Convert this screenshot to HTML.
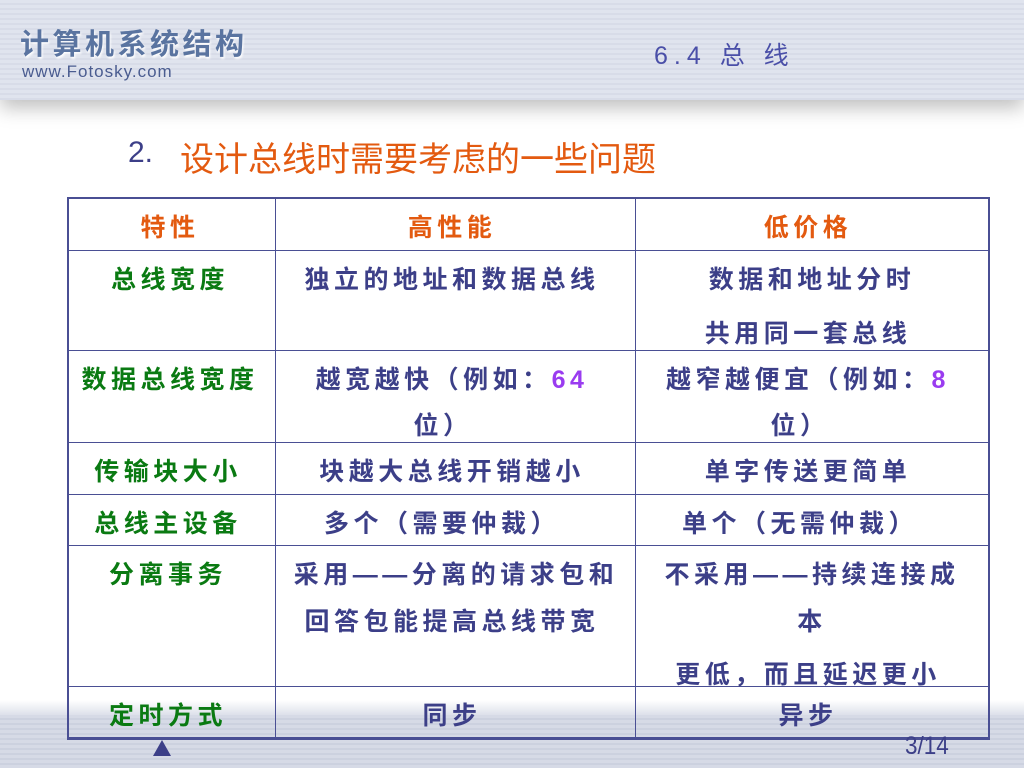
<!DOCTYPE html>
<html><head><meta charset="utf-8"><style>
body{margin:0;width:1024px;height:768px;overflow:hidden;background:#fff;position:relative;font-family:"Liberation Sans","Noto Sans CJK SC",sans-serif}
.hdr{position:absolute;left:0;top:0;width:1024px;height:100px;background:repeating-linear-gradient(#e0e4ee 0 3px,#d8dce8 3px 5px);box-shadow:0 8px 18px rgba(0,0,0,.25)}
.ftr{position:absolute;left:0;top:715px;width:1024px;height:53px;background:repeating-linear-gradient(#d6dae6 0 3px,#ccd1df 3px 5px)}
.ftrg{position:absolute;left:0;top:700px;width:1024px;height:18px;background:linear-gradient(#fff,#d6dae6)}
.t{position:absolute;white-space:nowrap;font-weight:bold;font-size:25px;letter-spacing:4.5px;color:#3c3f88;transform:translateX(-50%)}
.g{color:#0a7a12}.o{color:#e35a10}.p{color:#9a3cf0}
.vl{position:absolute;top:198px;height:539px;width:1px;background:#4a4f94}
.hl{position:absolute;left:68px;width:920px;height:1px;background:#4a4f94}
</style></head><body>
<div class="hdr"></div>
<div class="ftrg"></div><div class="ftr"></div>
<div style="position:absolute;left:20px;top:21px;font-size:29px;font-weight:bold;letter-spacing:3.5px;color:#5a74a0;text-shadow:1px 2px 2px #fff">计算机系统结构</div>
<div style="position:absolute;left:22px;top:62px;font-size:17px;color:#4a5c90;letter-spacing:1px">www.Fotosky.com</div>
<div style="position:absolute;left:654px;top:36px;font-size:25px;color:#4a4fa8;letter-spacing:6px">6.4 总 线</div>
<div style="position:absolute;left:128px;top:136px;font-size:30px;color:#3c3f88">2.</div>
<div style="position:absolute;left:180px;top:132px;font-size:34px;color:#e35a10">设计总线时需要考虑的一些问题</div>
<div style="position:absolute;left:67px;top:197px;width:919px;height:538px;border:2px solid #4a4f94;border-bottom-width:3px"></div>
<div class="vl" style="left:275px"></div><div class="vl" style="left:635px"></div>
<div class="hl" style="top:250px"></div><div class="hl" style="top:350px"></div><div class="hl" style="top:442px"></div><div class="hl" style="top:494px"></div><div class="hl" style="top:545px"></div><div class="hl" style="top:686px"></div>
<div class="t o" style="left:170px;top:208px">特性</div>
<div class="t o" style="left:452px;top:208px">高性能</div>
<div class="t o" style="left:808px;top:208px">低价格</div>
<div class="t g" style="left:170px;top:260px">总线宽度</div>
<div class="t" style="left:452px;top:260px">独立的地址和数据总线</div>
<div class="t" style="left:812px;top:260px">数据和地址分时</div>
<div class="t" style="left:808px;top:314px">共用同一套总线</div>
<div class="t g" style="left:170px;top:360px">数据总线宽度</div>
<div class="t" style="left:452px;top:360px">越宽越快（例如：<span class="p">64</span></div>
<div class="t" style="left:443px;top:406px">位）</div>
<div class="t" style="left:808px;top:360px">越窄越便宜（例如：<span class="p">8</span></div>
<div class="t" style="left:800px;top:406px">位）</div>
<div class="t g" style="left:168px;top:452px">传输块大小</div>
<div class="t" style="left:452px;top:452px">块越大总线开销越小</div>
<div class="t" style="left:808px;top:452px">单字传送更简单</div>
<div class="t g" style="left:168px;top:504px">总线主设备</div>
<div class="t" style="left:442px;top:504px">多个（需要仲裁）</div>
<div class="t" style="left:800px;top:504px">单个（无需仲裁）</div>
<div class="t g" style="left:168px;top:555px">分离事务</div>
<div class="t" style="left:456px;top:555px">采用——分离的请求包和</div>
<div class="t" style="left:452px;top:602px">回答包能提高总线带宽</div>
<div class="t" style="left:812px;top:555px">不采用——持续连接成</div>
<div class="t" style="left:812px;top:602px">本</div>
<div class="t" style="left:808px;top:655px">更低，而且延迟更小</div>
<div class="t g" style="left:168px;top:696px">定时方式</div>
<div class="t" style="left:452px;top:696px">同步</div>
<div class="t" style="left:808px;top:696px">异步</div>
<div style="position:absolute;left:153px;top:740px;width:0;height:0;border-left:9px solid transparent;border-right:9px solid transparent;border-bottom:16px solid #3c3f88"></div>
<div style="position:absolute;left:905px;top:732px;font-size:25px;color:#3c3f88;transform:scaleX(0.9);transform-origin:left">3/14</div>
</body></html>
